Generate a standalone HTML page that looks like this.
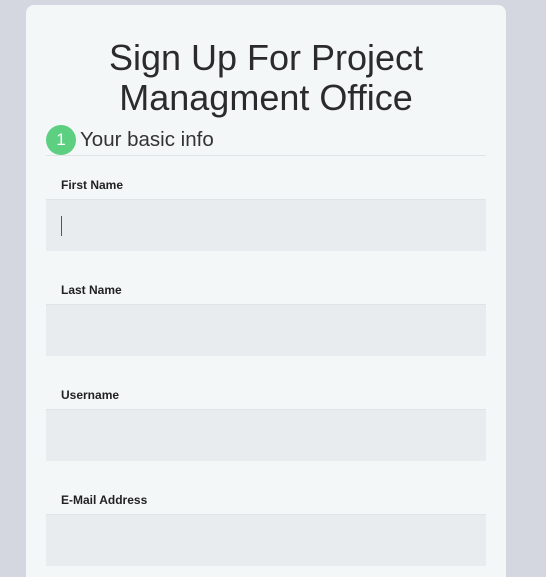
<!DOCTYPE html>
<html><head><style>
html,body{margin:0;padding:0;overflow:hidden;}
body{width:546px;height:577px;background:#d4d7df;overflow:hidden;font-family:"Liberation Sans",Arial,sans-serif;position:relative;}
.card{position:absolute;left:26px;top:5px;width:480px;height:572px;background:#f3f7f8;border-radius:8px 8px 0 0;overflow:hidden;}
h1{position:absolute;left:0;width:480px;top:33px;margin:0;text-align:center;font-weight:normal;font-size:36px;line-height:40px;color:#2b2b2b;}
.step{position:absolute;left:20px;top:120px;width:30px;height:30px;border-radius:50%;background:#5ccf80;color:#fff;font-size:17px;line-height:30px;text-align:center;}
.sub{position:absolute;left:54px;top:122px;font-size:20.5px;color:#333;line-height:26px;}
.hr{position:absolute;left:20px;top:150px;width:440px;height:1px;background:#e1e5e8;}
.lbl{position:absolute;left:35px;font-size:12px;font-weight:bold;color:#222;}
.inp{position:absolute;left:20px;width:440px;height:52px;background:#e8ecef;border-top:1px solid #e0e4e7;box-sizing:border-box;}
.caret{position:absolute;left:15px;top:16px;width:1px;height:20px;background:#555;}
</style></head><body>
<div class="card">
<h1>Sign Up For Project<br>Managment Office</h1>
<div class="step">1</div>
<div class="sub">Your basic info</div>
<div class="hr"></div>
<div class="lbl" style="top:173px">First Name</div>
<div class="inp" style="top:194px"><div class="caret"></div></div>
<div class="lbl" style="top:278px">Last Name</div>
<div class="inp" style="top:299px"></div>
<div class="lbl" style="top:383px">Username</div>
<div class="inp" style="top:404px"></div>
<div class="lbl" style="top:488px">E-Mail Address</div>
<div class="inp" style="top:509px"></div>
</div>
</body></html>
